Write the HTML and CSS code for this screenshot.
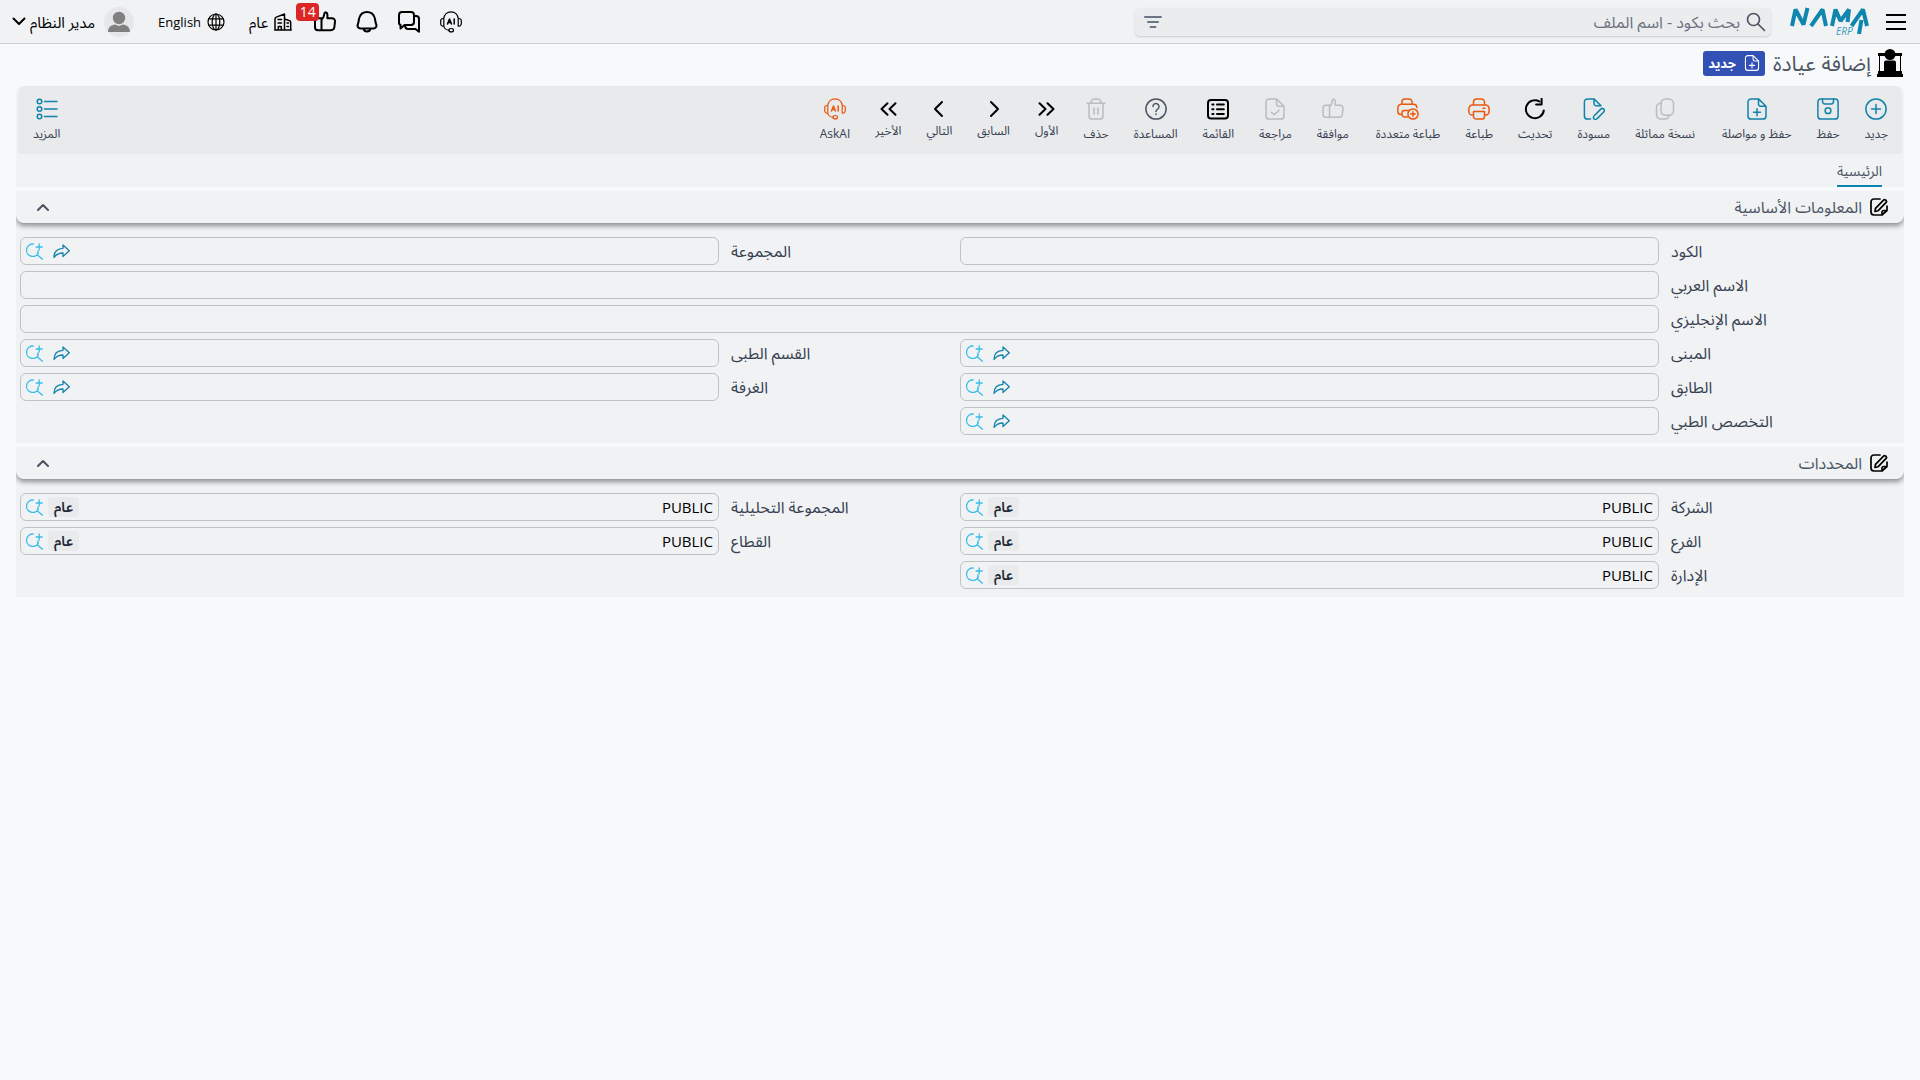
FILE: index.html
```html
<!DOCTYPE html>
<html lang="ar" dir="rtl">
<head>
<meta charset="utf-8">
<meta name="viewport" content="width=device-width, initial-scale=1">
<title>إضافة عيادة</title>
<link rel="stylesheet" href="styles.css">
</head>
<body>
<svg class="sprite" aria-hidden="true">
  <symbol id="i-plus-circle" viewBox="0 0 22 22"><circle cx="11" cy="11" r="10.1"/><path d="M11 6.6v8.8M6.6 11h8.8"/></symbol>
  <symbol id="i-save" viewBox="0 0 22 22"><rect x=".9" y=".9" width="20.2" height="20.2" rx="3.2"/><path d="M5.5 1v2.6a2.4 2.4 0 0 0 2.4 2.4h6.2a2.4 2.4 0 0 0 2.4-2.4V1"/><circle cx="11" cy="12.7" r="2.9"/></symbol>
  <symbol id="i-file-plus" viewBox="0 0 22 22"><path d="M12.5.9H5.2A3.2 3.2 0 0 0 2 4.100v13.800a3.200 3.200 0 0 0 3.200 3.200h11.600a3.200 3.200 0 0 0 3.200-3.200V8.200zV5.900a2.300 2.300 0 0 0 2.300 2.300H20M11 10.800v7M7.500 14.300h7"/></symbol>
  <symbol id="i-copy" viewBox="0 0 22 22"><rect x="7" y=".9" width="12.500" height="16.300" rx="4.500"/><path d="M7 5.300a4 4 0 0 0-4.500 4v7.300a4.500 4.500 0 0 0 4.500 4.500h3.500a4.500 4.500 0 0 0 4.500-3.900"/></symbol>
  <symbol id="i-draft" viewBox="0 0 22 22"><path d="M7.500 21.100H4.600a3.200 3.200 0 0 1-3.200-3.200V4.100A3.200 3.200 0 0 1 4.600.9h6.400l7 6.800M11 .9v4.500a2.300 2.300 0 0 0 2.300 2.300H18M11.500 17.500l6.300-6.400a2 2 0 0 1 2.900 2.900l-6.300 6.400a2.500 2.500 0 0 1-3.500.5 2.400 2.400 0 0 1 .6-3.400z"/></symbol>
  <symbol id="i-refresh" viewBox="0 0 22 22"><path d="M19.800 12.500a9 9 0 1 1-4.300-9"/><path d="M17.600.5v6h-5.500"/></symbol>
  <symbol id="i-print" viewBox="0 0 22 22"><path d="M5.500 7V4a3.100 3.100 0 0 1 3.100-3.100h4.800A3.100 3.100 0 0 1 16.500 4v3M5.500 17H4.200A3.300 3.300 0 0 1 .9 13.700v-3.100a3.600 3.600 0 0 1 3.600-3.600h13a3.600 3.600 0 0 1 3.600 3.600v3.100a3.300 3.300 0 0 1-3.300 3.300h-1.300M5.500 13.500h11v5a2.600 2.600 0 0 1-2.600 2.600H8.100a2.600 2.600 0 0 1-2.600-2.600zM15 10.300h2"/></symbol>
  <symbol id="i-print-plus" viewBox="0 0 22 22"><path d="M5 6.300V3.700A2.800 2.800 0 0 1 7.800.9h4.400A2.800 2.800 0 0 1 15 3.700v2.600M5 16.500H4a3.100 3.100 0 0 1-3.100-3.100V9.600A3.300 3.300 0 0 1 4.200 6.300h12.300a3.300 3.300 0 0 1 3.300 3.300M11.500 12.500H7.300A2.300 2.300 0 0 0 5 14.800v1.700a2.600 2.600 0 0 0 2.600 2.600h3"/><circle cx="16" cy="16" r="5.100"/><path d="M16 13.700v4.600M13.700 16h4.600"/></symbol>
  <symbol id="i-thumb" viewBox="0 0 22 22"><path d="M1 10.200a3 3 0 0 1 3-3h3.500v12H4a3 3 0 0 1-3-3zM7.500 8.600c2.500-1.700 2.600-4.300 2.900-6.200.3-1.700 3-1.300 3 1.200v3.600H18a3 3 0 0 1 3 3.200l-.6 5.600a3.500 3.500 0 0 1-3.500 3.200H7.500"/></symbol>
  <symbol id="i-file-check" viewBox="0 0 22 22"><path d="M12.500.9H5.200A3.200 3.200 0 0 0 2 4.100v13.800a3.200 3.200 0 0 0 3.200 3.200h11.600a3.200 3.200 0 0 0 3.200-3.200V8.200zV5.900a2.300 2.300 0 0 0 2.300 2.300H20M7.300 14.200l2.900 2.600 4.800-4.500"/></symbol>
  <symbol id="i-list" viewBox="0 0 22 22"><rect x="1" y="2" width="20" height="18.500" rx="3"/><path d="M10 6.500h6.800M10 11.200h6.800M10 16h6.800M5.300 6.500h1.200M5.300 11.200h1.200M5.300 16h1.200"/></symbol>
  <symbol id="i-help" viewBox="0 0 22 22"><circle cx="11" cy="11" r="10.100"/><path d="M8 8.600a3 3 0 1 1 4.700 2.400c-1 .7-1.700 1.200-1.700 2.400M11 16v.6"/></symbol>
  <symbol id="i-trash" viewBox="0 0 22 22"><path d="M2 5.200h18M6 5V4.500A3.600 3.600 0 0 1 9.600.9h2.800A3.600 3.600 0 0 1 16 4.500V5M4 5.200v12.700a3.200 3.200 0 0 0 3.200 3.200h7.600a3.200 3.200 0 0 0 3.200-3.200V5.200M9 10v6M13 10v6"/></symbol>
  <symbol id="i-next2" viewBox="0 0 22 22"><path d="M3.500 5.200l6 5.800-6 5.800M11.500 5.200l6 5.800-6 5.800"/></symbol>
  <symbol id="i-next" viewBox="0 0 22 22"><path d="M8 4l7 7-7 7"/></symbol>
  <symbol id="i-prev" viewBox="0 0 22 22"><path d="M14 4l-7 7 7 7"/></symbol>
  <symbol id="i-prev2" viewBox="0 0 22 22"><path d="M10.500 5.200l-6 5.800 6 5.800M18.500 5.200l-6 5.800 6 5.800"/></symbol>
  <symbol id="i-ai" viewBox="0 0 22 22"><path d="M3.800 7.500C4.200 3.700 7 .8 11 .8s6.800 2.900 7.200 6.700M3.800 7.500H3A2.300 2.300 0 0 0 .7 9.800v3A2.300 2.300 0 0 0 3 15.100h.8zM18.200 7.500h.8a2.300 2.300 0 0 1 2.300 2.300v3a2.300 2.300 0 0 1-2.300 2.300h-.8zM3.800 15c.5 2.500 2.500 4 5.200 4.200"/><ellipse cx="11.200" cy="19.200" rx="2.300" ry="1.700"/><path class="heavy" d="M7.500 13l2-5 2 5M8.300 11.500h2.400M14.200 8v5"/></symbol>
  <symbol id="i-more" viewBox="0 0 22 22"><circle cx="3.500" cy="3.500" r="2.300"/><circle cx="3.500" cy="11" r="2.300"/><circle cx="3.500" cy="18.500" r="2.300"/><path d="M8.500 3.500H21M8.500 11H21M8.500 18.500H21"/></symbol>
  <symbol id="i-edit" viewBox="0 0 18 18"><path d="M10 1H4a3 3 0 0 0-3 3v10a3 3 0 0 0 3 3h8l5-4.500V8M12 17v-2.500a2 2 0 0 1 2-2h3M5.500 10.300l7.800-8a1.700 1.700 0 0 1 2.600 2.400l-7.700 8L5 13.500z"/></symbol>
  <symbol id="i-up" viewBox="0 0 12 8"><path d="M1 7l5-5 5 5"/></symbol>
  <symbol id="i-lookup" viewBox="0 0 17 17"><path d="M7.200 1A6.200 6.200 0 1 0 12.400 9.800M12 7.800L11.500 12l5 4.200M8.800 13.200l2.700-1.200M13.200 1v6M10.200 4h6"/></symbol>
  <symbol id="i-share" viewBox="0 0 17 15"><path d="M1 13.500C1 8 3.800 4.500 10 4.300V1l6.300 5.700-6.300 5.800V9C6 9 3.200 10.300 1 13.500z"/></symbol>
  <symbol id="i-chat" viewBox="0 0 22 22"><path d="M4 1h9a3 3 0 0 1 3 3v7a3 3 0 0 1-3 3H6.500L2.500 17.500V14A2.500 2.500 0 0 1 1 11.500V4a3 3 0 0 1 3-3zM16 5h2a3 3 0 0 1 3 3v12.800L17.500 18H10a3 3 0 0 1-2.800-2.500"/></symbol>
  <symbol id="i-bell" viewBox="0 0 22 22"><path d="M4.500 17.500a3 3 0 0 1-2.700-4.200C3 10.500 2.600 8.500 3.400 6.500A8 8 0 0 1 11 1a8 8 0 0 1 7.600 5.500c.8 2 .4 4 1.600 6.800a3 3 0 0 1-2.700 4.200zM7.500 17.700a3.600 3.600 0 0 0 7 0"/></symbol>
  <symbol id="i-building" viewBox="0 0 18 18"><path d="M1 17V6a2 2 0 0 1 1.300-1.900L10.500 1v16M.7 17h16.600M10.500 6l4.500 1.500a2 2 0 0 1 1.700 2V17M4.300 17v-3.500h3V17M4 6.500h3.500M4 10h3.500M13 10h1.500M13 13.500h1.500"/></symbol>
  <symbol id="i-globe" viewBox="0 0 18 18"><circle cx="9" cy="9" r="8"/><ellipse cx="9" cy="9" rx="3.800" ry="8"/><path d="M1.900 5.800h14.200M1.900 12.200h14.200M9 1v16"/></symbol>
  <symbol id="i-down" viewBox="0 0 14 9"><path d="M1.500 1.500L7 7l5.500-5.500"/></symbol>
  <symbol id="i-search" viewBox="0 0 20 20"><circle cx="7.500" cy="7.500" r="6"/><path d="M12 12l6.500 6.500"/></symbol>
  <symbol id="i-filter" viewBox="0 0 18 14"><path d="M1 2h16M4 7h10M6.500 12h5"/></symbol>
  <symbol id="i-menu" viewBox="0 0 20 16"><path d="M0 1h20M0 8h20M0 15h20"/></symbol>
</svg>

<header class="topbar">
  <div class="topbar-start">
    <button class="icon-btn" aria-label="القائمة الرئيسية"><svg class="ico w20 heavy-line"><use href="#i-menu"/></svg></button>
    <a class="logo" href="#" aria-label="NAMA ERP" dir="ltr">
      <svg viewBox="0 0 80 30" width="80" height="30"><g fill="none" stroke="#0f86ae" stroke-width="4" stroke-linejoin="bevel"><path d="M2 19L5.500 2.500 13.500 17.500 17.500 1M21 19L32.500 2.500 36 19M42 19L45.500 2.500 50.500 14 59 2.500 57.500 15M61.500 19L73 2.500 77 19"/><path d="M71.500 13L69 27"/></g><text x="46" y="28" class="logo-sub">ERP</text></svg>
    </a>
    <form class="search" role="search">
      <svg class="ico w20 search-ico"><use href="#i-search"/></svg>
      <input type="search" placeholder="بحث بكود - اسم الملف" aria-label="بحث">
      <button type="button" class="icon-btn" aria-label="تصفية"><svg class="ico w18 filter-ico"><use href="#i-filter"/></svg></button>
    </form>
  </div>
  <div class="topbar-end">
    <button class="icon-btn" aria-label="AI"><svg class="ico w22 thin"><use href="#i-ai"/></svg></button>
    <button class="icon-btn" aria-label="المحادثات"><svg class="ico w22 bold"><use href="#i-chat"/></svg></button>
    <button class="icon-btn" aria-label="الإشعارات"><svg class="ico w22 bold"><use href="#i-bell"/></svg></button>
    <button class="icon-btn with-badge" aria-label="الموافقات"><svg class="ico w22 bold"><use href="#i-thumb"/></svg><span class="badge">14</span></button>
    <button class="text-btn branch"><svg class="ico w18"><use href="#i-building"/></svg>عام</button>
    <button class="text-btn lang"><svg class="ico w18 thin"><use href="#i-globe"/></svg>English</button>
    <button class="text-btn user"><svg class="avatar" viewBox="0 0 30 30"><circle cx="15" cy="15" r="15" fill="#e5e7eb"/><circle cx="15" cy="11" r="6.200" fill="#808080"/><path d="M4 25c0-5 3.500-7 7-7.500l4 1.500 4-1.500c3.500.5 7 2.500 7 7.500z" fill="#808080"/></svg>مدير النظام<svg class="ico caret"><use href="#i-down"/></svg></button>
  </div>
</header>

<main class="page">
  <div class="title-row">
    <svg class="clinic" viewBox="0 0 26 28" aria-hidden="true"><circle cx="13" cy="5.500" r="5.500"/><path d="M1 4h24v3H1zM2 7h1v18H2zM23 7h1v18h-1zM7 13.500a2 2 0 0 1 2-2h8a2 2 0 0 1 2 2V22H7zM1 22h24v3H1zM0 25h26v3H0z"/></svg>
    <h1>إضافة عيادة</h1>
    <span class="tag-new"><svg class="ico"><use href="#i-file-plus"/></svg>جديد</span>
  </div>

  <div class="panel">
    <div class="toolbar" role="toolbar">
      <button class="tool blue"><svg class="ico w22"><use href="#i-plus-circle"/></svg>جديد</button>
      <button class="tool blue"><svg class="ico w22"><use href="#i-save"/></svg>حفظ</button>
      <button class="tool blue"><svg class="ico w22"><use href="#i-file-plus"/></svg>حفظ و مواصلة</button>
      <button class="tool off group-start"><svg class="ico w22"><use href="#i-copy"/></svg>نسخة مماثلة</button>
      <button class="tool blue"><svg class="ico w22"><use href="#i-draft"/></svg>مسودة</button>
      <button class="tool"><svg class="ico w22 bold"><use href="#i-refresh"/></svg>تحديث</button>
      <button class="tool orange"><svg class="ico w22"><use href="#i-print"/></svg>طباعة</button>
      <button class="tool orange"><svg class="ico w22"><use href="#i-print-plus"/></svg>طباعة متعددة</button>
      <button class="tool off group-start"><svg class="ico w22"><use href="#i-thumb"/></svg>موافقة</button>
      <button class="tool off"><svg class="ico w22"><use href="#i-file-check"/></svg>مراجعة</button>
      <button class="tool"><svg class="ico w22 bold"><use href="#i-list"/></svg>القائمة</button>
      <button class="tool gray"><svg class="ico w22"><use href="#i-help"/></svg>المساعدة</button>
      <button class="tool off"><svg class="ico w22"><use href="#i-trash"/></svg>حذف</button>
      <button class="tool nav"><svg class="ico w22 bold"><use href="#i-next2"/></svg>الأول</button>
      <button class="tool nav"><svg class="ico w22 bold"><use href="#i-next"/></svg>السابق</button>
      <button class="tool nav"><svg class="ico w22 bold"><use href="#i-prev"/></svg>التالي</button>
      <button class="tool nav"><svg class="ico w22 bold"><use href="#i-prev2"/></svg>الأخير</button>
      <button class="tool orange"><svg class="ico w22 thin"><use href="#i-ai"/></svg>AskAI</button>
      <button class="tool blue more"><svg class="ico w22"><use href="#i-more"/></svg>المزيد</button>
    </div>
    <nav class="tabs"><a class="tab" href="#">الرئيسية</a></nav>
  </div>

  <section class="section">
    <header class="section-head">
      <svg class="ico w18 edit"><use href="#i-edit"/></svg><h2>المعلومات الأساسية</h2>
      <button class="icon-btn fold" aria-label="طي"><svg class="ico"><use href="#i-up"/></svg></button>
    </header>
    <div class="fields">
      <label for="code">الكود</label>
      <div class="box"><input id="code"></div>
      <label for="group">المجموعة</label>
      <div class="box"><input id="group"><button class="icon-btn link" aria-label="فتح"><svg class="ico"><use href="#i-share"/></svg></button><button class="icon-btn look" aria-label="بحث"><svg class="ico"><use href="#i-lookup"/></svg></button></div>
      <label for="name-ar">الاسم العربي</label>
      <div class="box wide"><input id="name-ar"></div>
      <label for="name-en">الاسم الإنجليزي</label>
      <div class="box wide"><input id="name-en"></div>
      <label for="building">المبنى</label>
      <div class="box"><input id="building"><button class="icon-btn link" aria-label="فتح"><svg class="ico"><use href="#i-share"/></svg></button><button class="icon-btn look" aria-label="بحث"><svg class="ico"><use href="#i-lookup"/></svg></button></div>
      <label for="dept">القسم الطبى</label>
      <div class="box"><input id="dept"><button class="icon-btn link" aria-label="فتح"><svg class="ico"><use href="#i-share"/></svg></button><button class="icon-btn look" aria-label="بحث"><svg class="ico"><use href="#i-lookup"/></svg></button></div>
      <label for="floor">الطابق</label>
      <div class="box"><input id="floor"><button class="icon-btn link" aria-label="فتح"><svg class="ico"><use href="#i-share"/></svg></button><button class="icon-btn look" aria-label="بحث"><svg class="ico"><use href="#i-lookup"/></svg></button></div>
      <label for="room">الغرفة</label>
      <div class="box"><input id="room"><button class="icon-btn link" aria-label="فتح"><svg class="ico"><use href="#i-share"/></svg></button><button class="icon-btn look" aria-label="بحث"><svg class="ico"><use href="#i-lookup"/></svg></button></div>
      <label for="spec">التخصص الطبي</label>
      <div class="box"><input id="spec"><button class="icon-btn link" aria-label="فتح"><svg class="ico"><use href="#i-share"/></svg></button><button class="icon-btn look" aria-label="بحث"><svg class="ico"><use href="#i-lookup"/></svg></button></div>
    </div>
  </section>

  <section class="section">
    <header class="section-head">
      <svg class="ico w18 edit"><use href="#i-edit"/></svg><h2>المحددات</h2>
      <button class="icon-btn fold" aria-label="طي"><svg class="ico"><use href="#i-up"/></svg></button>
    </header>
    <div class="fields">
      <label for="company">الشركة</label>
      <div class="box"><input id="company" value="PUBLIC"><span class="chip">عام</span><button class="icon-btn look" aria-label="بحث"><svg class="ico"><use href="#i-lookup"/></svg></button></div>
      <label for="analysis">المجموعة التحليلية</label>
      <div class="box"><input id="analysis" value="PUBLIC"><span class="chip">عام</span><button class="icon-btn look" aria-label="بحث"><svg class="ico"><use href="#i-lookup"/></svg></button></div>
      <label for="branch">الفرع</label>
      <div class="box"><input id="branch" value="PUBLIC"><span class="chip">عام</span><button class="icon-btn look" aria-label="بحث"><svg class="ico"><use href="#i-lookup"/></svg></button></div>
      <label for="sector">القطاع</label>
      <div class="box"><input id="sector" value="PUBLIC"><span class="chip">عام</span><button class="icon-btn look" aria-label="بحث"><svg class="ico"><use href="#i-lookup"/></svg></button></div>
      <label for="admin">الإدارة</label>
      <div class="box"><input id="admin" value="PUBLIC"><span class="chip">عام</span><button class="icon-btn look" aria-label="بحث"><svg class="ico"><use href="#i-lookup"/></svg></button></div>
    </div>
  </section>
</main>
</body>
</html>
```
FILE: styles.css
```css
* { box-sizing: border-box; }

body {
  margin: 0;
  background: #f8f9fb;
  color: #000;
  font: 14px/20px "Open Sans", "Noto Sans", "Noto Sans Arabic", "DejaVu Sans", sans-serif;
}

button, input { font: inherit; color: inherit; }

button {
  border: 0;
  padding: 0;
  background: none;
  cursor: pointer;
}

h1, h2 { margin: 0; font-weight: 400; }

.sprite { position: absolute; width: 0; height: 0; }

.ico {
  display: block;
  flex: none;
  width: 16px;
  height: 16px;
  fill: none;
  stroke: currentColor;
  stroke-width: 1.5;
  stroke-linecap: round;
  stroke-linejoin: round;
}
.w18 { width: 18px; height: 18px; }
.w20 { width: 20px; height: 20px; }
.w22 { width: 22px; height: 22px; }
.bold { stroke-width: 2; }
.edit { stroke-width: 1.7; }
.thin { stroke-width: 1.2; }
.heavy { stroke-width: 1.5; }
.heavy-line { stroke-width: 2; }

.icon-btn { display: flex; align-items: center; }

/* top bar */
.topbar {
  display: flex;
  justify-content: space-between;
  height: 44px;
  padding: 0 14px 0 12px;
  background: #f0f2f4;
  border-bottom: 1px solid #cdd0d4;
}
.topbar-start, .topbar-end { display: flex; align-items: center; }
.logo { display: block; margin: 0 16px 0 19px; height: 30px; }
.logo svg { display: block; }
.logo-sub { font: italic 10px "Open Sans", sans-serif; fill: #3a9bbd; }

.search {
  display: flex;
  align-items: center;
  gap: 6px;
  width: 636px;
  height: 28px;
  padding: 0 5px 0 9px;
  border-radius: 5px;
  background: #eaecee;
  box-shadow: 0 1px 2px #c9ccd0;
}
.search input {
  flex: 1;
  min-width: 0;
  padding: 0;
  border: 0;
  outline: 0;
  background: none;
  font-size: 16px;
}
.search input::placeholder { color: #6b7280; opacity: 1; }
.search-ico { color: #4b5563; stroke-width: 1.7; }
.filter-ico { color: #6b7588; stroke-width: 2; }

.topbar-end > .icon-btn { margin-left: 20px; }
.with-badge { position: relative; }
.badge {
  position: absolute;
  top: -8px;
  left: -18px;
  width: 23px;
  height: 18px;
  border-radius: 4px;
  background: #dc2626;
  color: #fff;
  line-height: 18px;
  text-align: center;
}
.text-btn { display: flex; align-items: center; gap: 6px; font-size: 15px; }
.branch { margin: 0 2px 0 24px; }
.lang { margin-left: 24px; font-size: 13px; }
.user { gap: 9px; }
.avatar { width: 30px; height: 30px; }
.caret { width: 14px; height: 9px; margin-right: -5px; stroke-width: 2; }

/* page */
.page { padding: 0 16px; }
.title-row {
  display: flex;
  align-items: center;
  gap: 6px;
  height: 42px;
  padding: 0 1px 4px 0;
}
.clinic { width: 26px; height: 28px; }
.title-row h1 { font-size: 21px; line-height: 28px; color: #4b5563; }
.tag-new {
  display: flex;
  align-items: center;
  gap: 8px;
  height: 25px;
  margin-right: 2px;
  padding: 0 5px;
  border-radius: 3px;
  background: #3151b5;
  color: #fff;
  font-size: 13px;
  font-weight: 700;
}

.panel {
  background: #f0f2f4;
  border-radius: 8px 8px 0 0;
}
.toolbar {
  display: flex;
  align-items: flex-start;
  gap: 1px;
  height: 68px;
  margin: 0 2px;
  padding: 12px 2px 0 3px;
  border-radius: 8px 8px 0 0;
  background: #e8eaec;
}
.tool {
  display: flex;
  flex-direction: column;
  align-items: center;
  gap: 4px;
  padding: 0 12px;
  font-size: 12px;
  line-height: 20px;
  white-space: nowrap;
  color: #374151;
}
.tool .ico { color: #000; }
.tool.nav { gap: 1px; }
.tool.group-start { margin-right: 2px; }
.tool.blue .ico { color: #1283ab; }
.tool.orange .ico { color: #ea580c; }
.tool.gray .ico { color: #4b5563; }
.tool.off .ico { color: #b9bcc2; }
.tool.more { margin-right: auto; }

.tabs {
  display: flex;
  height: 33px;
  padding: 0 22px;
}
.tab {
  display: flex;
  align-items: center;
  padding-top: 2px;
  border-bottom: 2px solid #0a84b0;
  color: #4b5563;
  font-size: 14px;
  text-decoration: none;
}

.section { margin-top: 4px; background: #f0f2f4; }
.section-head {
  display: flex;
  align-items: center;
  gap: 8px;
  height: 32px;
  padding: 0 16px 0 20px;
  border-radius: 0 0 8px 8px;
  background: #f0f2f4;
  box-shadow: 0 3px 5px #8f9194;
  clip-path: inset(0 0 -12px 0);
}
.section-head h2 { color: #4b5563; font-size: 16px; line-height: 24px; }
.section-head .fold { margin-right: auto; padding-left: 1px; color: #4b5563; }
.fold .ico { width: 12px; height: 8px; stroke-width: 2; }

.fields {
  display: grid;
  grid-template-columns: 241px 1fr 241px 1fr;
  row-gap: 6px;
  padding: 14px 4px 8px;
}
.fields label {
  padding-left: 12px;
  color: #374151;
  font-size: 16px;
  line-height: 28px;
  text-align: left;
}
.box {
  display: flex;
  align-items: center;
  height: 28px;
  padding: 0 5px;
  border: 1px solid #bfc2c6;
  border-radius: 6px;
}
.wide { grid-column: span 3; }
.box input {
  flex: 1;
  min-width: 0;
  padding: 0;
  border: 0;
  outline: 0;
  background: none;
  font-size: 15px;
}
.look { color: #38bdea; }
.look .ico { width: 17px; height: 17px; stroke-width: 1.3; }
.link { margin-left: 10px; color: #1683aa; }
.link .ico { width: 17px; height: 15px; stroke-width: 1.3; }
.chip {
  height: 20px;
  margin-left: 5px;
  padding: 0 6px;
  border-radius: 4px;
  background: #e8eaec;
  color: #1f2937;
  font-weight: 600;
}
```
